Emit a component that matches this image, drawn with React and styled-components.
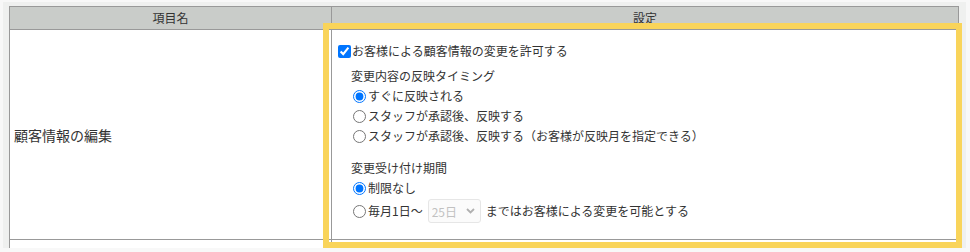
import React from 'react';
import styled, { createGlobalStyle } from 'styled-components';

const GlobalStyle = createGlobalStyle`
  html, body {
    margin: 0;
    padding: 0;
    background: #f8f8f8;
  }
  body {
    font-family: "Noto Sans CJK JP", "Noto Sans", sans-serif;
    color: #333;
  }
`;

// gray panel around the settings table
const Panel = styled.div`
  position: relative;
  margin: 2px 0 0 3px;
  width: 963px;
  height: 246px;
  box-sizing: border-box;
  padding: 4px 0 0 6px;
  background: #eff0ef;
  overflow: hidden;
`;

const Table = styled.table`
  width: 950px;
  border-collapse: collapse;
  table-layout: fixed;
  background: #fff;
  font-size: 12px;
`;

const HeadCell = styled.th`
  height: 22px;
  padding: 0;
  background: #c9ccc9;
  border: 1px solid #999;
  font-weight: normal;
  font-size: 12px;
  line-height: 22px;
  text-align: center;
  color: #333;
`;

const NameCell = styled.td`
  width: 314px;
  padding: 0 4px;
  border: 1px solid #999;
  font-size: 14px;
  vertical-align: middle;
`;

const SettingCell = styled.td`
  padding: 10px 6px 15px;
  border: 1px solid #999;
  vertical-align: top;
`;

const EmptyCell = styled.td`
  height: 30px;
  border: 1px solid #999;
`;

const CheckRow = styled.label`
  display: flex;
  align-items: center;
  height: 22px;
  line-height: 22px;
`;

const CheckBox = styled.input.attrs({ type: 'checkbox' })`
  width: 13px;
  height: 13px;
  margin: 0 1px 0 0;
  accent-color: #0075ff;
`;

const Group = styled.div`
  margin-left: 13px;
  margin-top: ${p => p.$top}px;
`;

const GroupLabel = styled.div`
  height: 20px;
  line-height: 20px;
`;

const RadioRow = styled.label`
  display: flex;
  align-items: center;
  height: ${p => (p.$tall ? 26 : 20)}px;
  line-height: 20px;
  white-space: nowrap;
`;

const Radio = styled.input.attrs({ type: 'radio' })`
  width: 13px;
  height: 13px;
  margin: 0 2px 0 2px;
  accent-color: #0075ff;
`;

const SelectWrap = styled.span`
  position: relative;
  display: inline-block;
  margin: 0 5px 0 5px;
`;

const Select = styled.select`
  appearance: none;
  width: 53px;
  height: 24px;
  box-sizing: border-box;
  padding: 0 0 0 3px;
  border: 1px solid #dcdcdc;
  border-radius: 3px;
  background: #fafafa;
  color: #a8a8a8;
  font-family: inherit;
  font-size: 12px;
`;

const Chevron = styled.svg`
  position: absolute;
  right: 6px;
  top: 9px;
  pointer-events: none;
`;

// yellow highlight drawn over the settings cell
const Highlight = styled.div`
  position: absolute;
  left: 320px;
  top: 21px;
  width: 639px;
  height: 225px;
  box-sizing: border-box;
  border: 6px solid #f9d45a;
  pointer-events: none;
`;

const App = () => {
  return (
    <>
      <GlobalStyle />
      <Panel>
        <Table>
          <thead>
            <tr>
              <HeadCell style={{ width: 321 }}>項目名</HeadCell>
              <HeadCell>設定</HeadCell>
            </tr>
          </thead>
          <tbody>
            <tr>
              <NameCell>顧客情報の編集</NameCell>
              <SettingCell>
                <CheckRow>
                  <CheckBox defaultChecked />
                  お客様による顧客情報の変更を許可する
                </CheckRow>
                <Group $top={4}>
                  <GroupLabel>変更内容の反映タイミング</GroupLabel>
                  <RadioRow>
                    <Radio name="timing" defaultChecked />
                    すぐに反映される
                  </RadioRow>
                  <RadioRow>
                    <Radio name="timing" />
                    スタッフが承認後、反映する
                  </RadioRow>
                  <RadioRow>
                    <Radio name="timing" />
                    スタッフが承認後、反映する（お客様が反映月を指定できる）
                  </RadioRow>
                </Group>
                <Group $top={12}>
                  <GroupLabel>変更受け付け期間</GroupLabel>
                  <RadioRow>
                    <Radio name="period" defaultChecked />
                    制限なし
                  </RadioRow>
                  <RadioRow $tall>
                    <Radio name="period" />
                    毎月1日～
                    <SelectWrap>
                      <Select disabled defaultValue="25">
                        <option value="25">25日</option>
                      </Select>
                      <Chevron width="9" height="6" viewBox="0 0 9 6">
                        <path d="M1 1l3.5 3.5L8 1" fill="none" stroke="#b0b0b0" strokeWidth="1.8" />
                      </Chevron>
                    </SelectWrap>
                    まではお客様による変更を可能とする
                  </RadioRow>
                </Group>
              </SettingCell>
            </tr>
            <tr>
              <EmptyCell />
              <EmptyCell />
            </tr>
          </tbody>
        </Table>
        <Highlight />
      </Panel>
    </>
  );
};

export default App;
